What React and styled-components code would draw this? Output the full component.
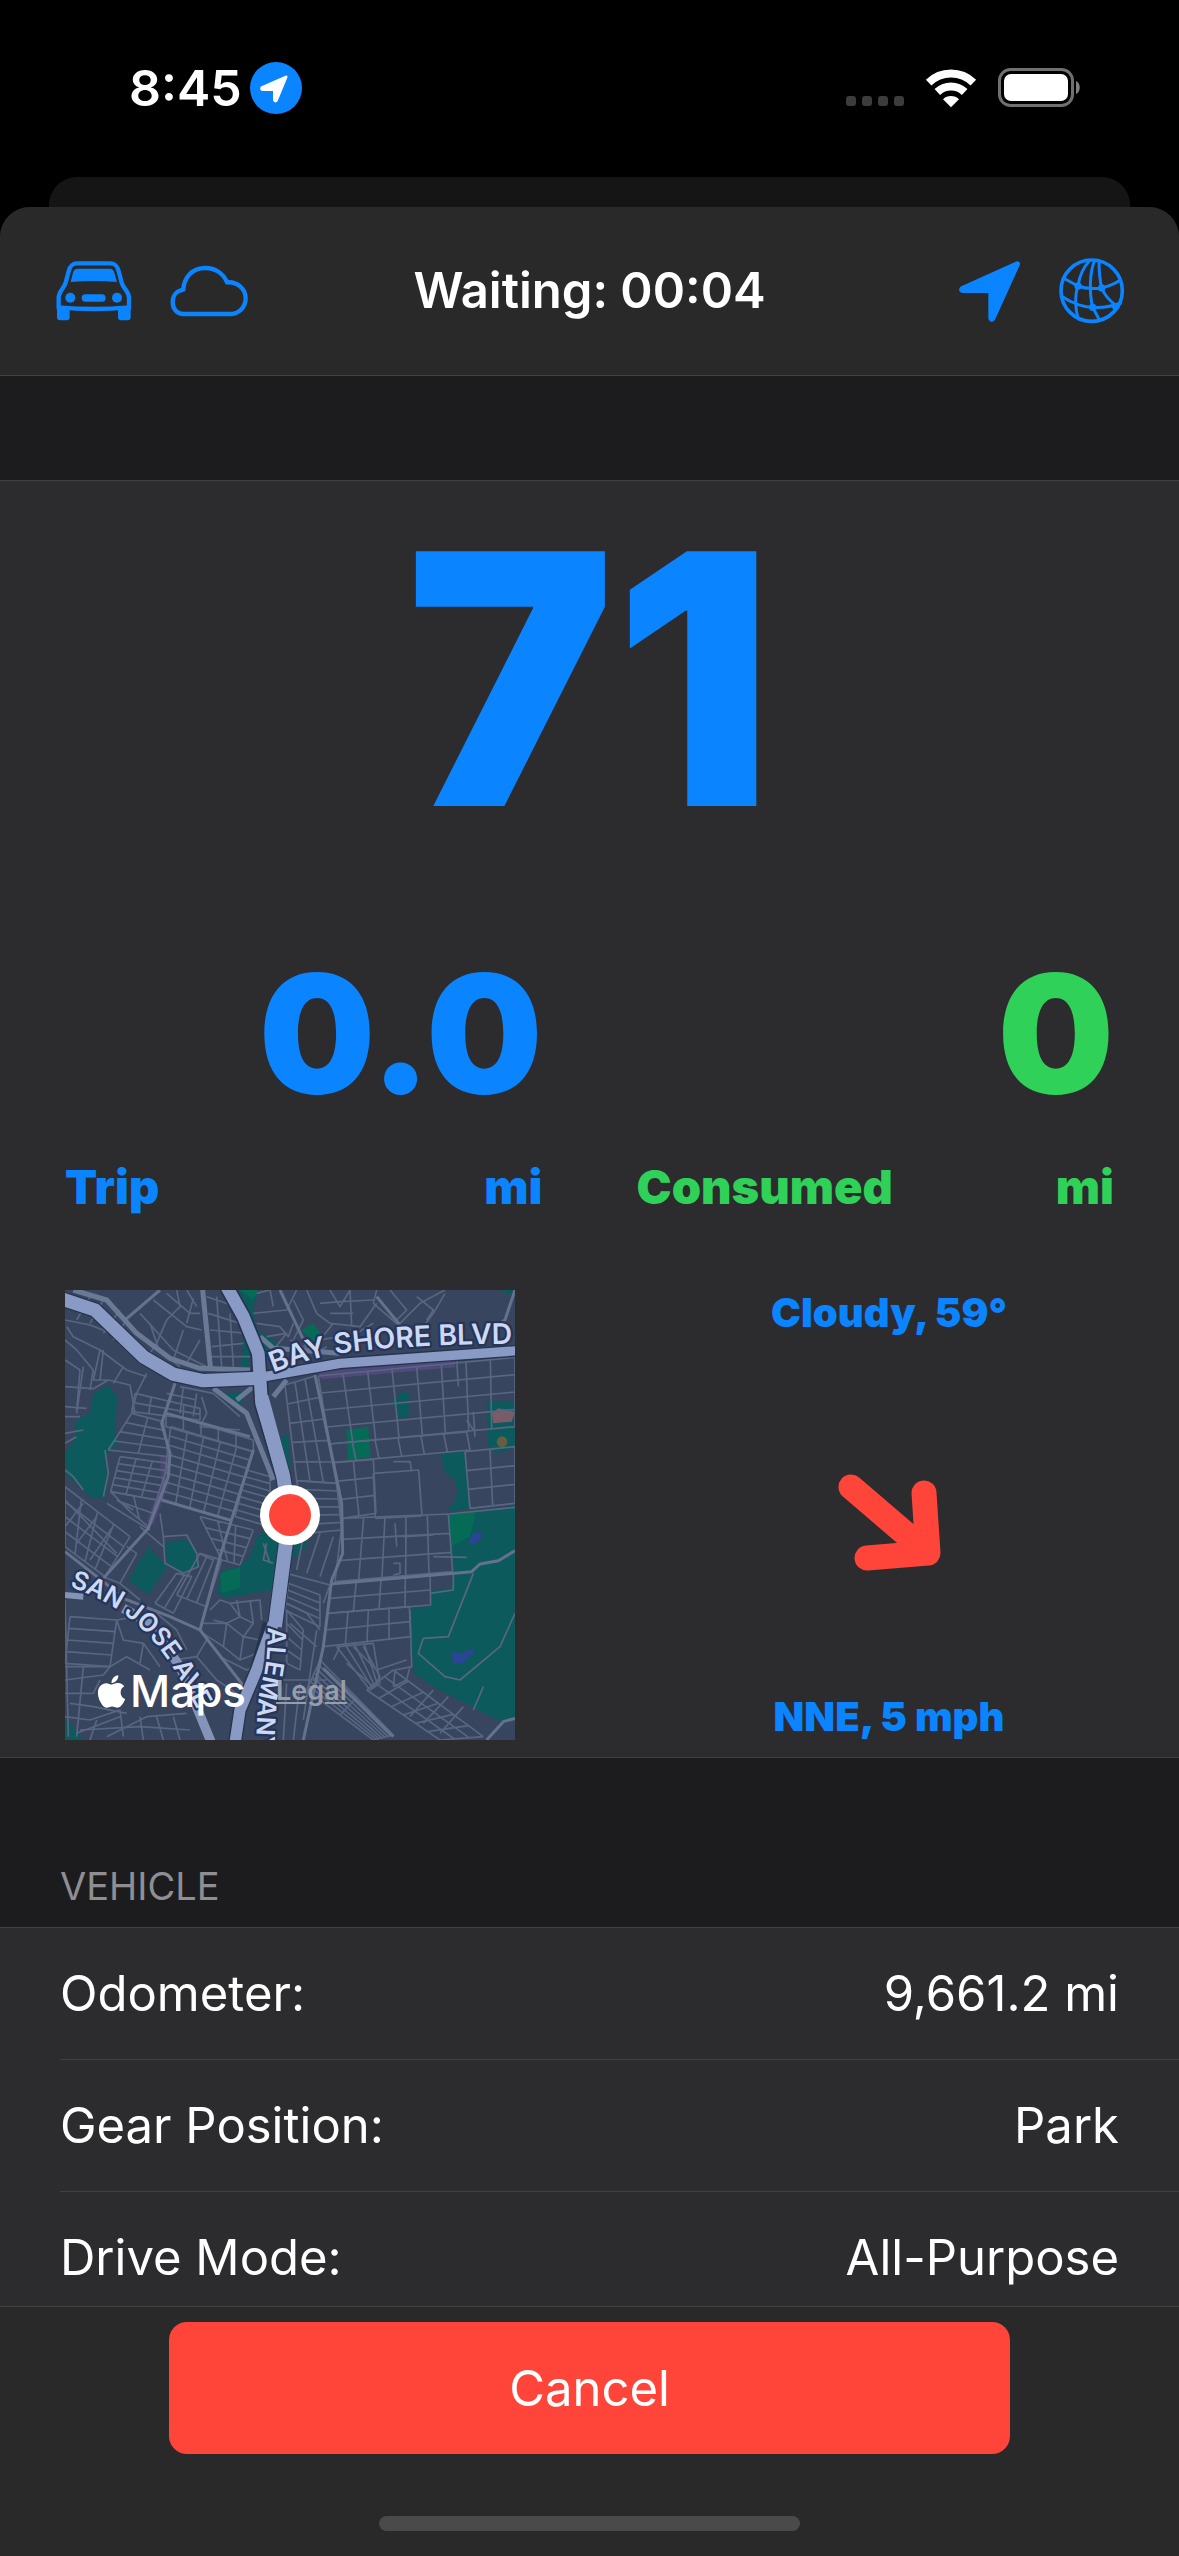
import React from "react";
import styled, { createGlobalStyle } from "styled-components";
import { FaApple } from "react-icons/fa";

const GlobalStyle = createGlobalStyle`
  :root {
    --BLUE: #0a84ff;
    --GREEN: #30d158;
    --RED: #ff453a;
    --BAR: #292929;
    --CELL: #2c2c2e;
    --GROUP: #1c1c1e;
    --LINE: #414143;
  }
  * {
    box-sizing: border-box;
  }
  body {
    margin: 0;
    background: #000;
    color: #fff;
    font-family: Inter, "Liberation Sans", sans-serif;
  }
`;

const Screen = styled.div`
  display: flex;
  flex-direction: column;
  height: 100vh;
`;

const StatusBar = styled.div`
  display: flex;
  justify-content: space-between;
  align-items: center;
  height: 176px;
  padding: 0 98px 0 129px;
`;

const StatusGroup = styled.div`
  display: flex;
  align-items: center;
  gap: ${(props) => props.$gap}px;
`;

const Clock = styled.span`
  font-size: 50px;
  line-height: 60px;
  font-weight: 600;
`;

const CellDots = styled.div`
  display: flex;
  gap: 6px;
  padding-top: 26px;

  span {
    width: 10px;
    height: 10px;
    border-radius: 3px;
    background: #3c3c3c;
  }
`;

const BackSheet = styled.div`
  height: 30px;
  margin: 1px 49px 0;
  border-radius: 28px 28px 0 0;
  background: #151515;
`;

const Sheet = styled.main`
  display: flex;
  flex-direction: column;
  flex: 1;
  min-height: 0;
  overflow: hidden;
  border-radius: 30px 30px 0 0;
  background: var(--GROUP);
`;

const Toolbar = styled.header`
  display: grid;
  grid-template-columns: 1fr auto 1fr;
  align-items: center;
  height: 169px;
  padding: 0 54px;
  border-bottom: 1px solid var(--LINE);
  background: var(--BAR);
`;

const ToolGroup = styled.div`
  display: flex;
  align-items: center;
  justify-content: ${(props) => (props.$end ? "flex-end" : "flex-start")};
  gap: 36px;
`;

const IconButton = styled.button`
  display: flex;
  padding: 0;
  border: none;
  background: none;
  color: var(--BLUE);
  cursor: pointer;
`;

const Title = styled.h1`
  margin: 0;
  font-size: 49px;
  line-height: 60px;
  font-weight: 600;
`;

const Content = styled.div`
  flex: 1;
  min-height: 0;
  overflow: hidden;
`;

const Dashboard = styled.section`
  margin-top: 104px;
  padding: 0 65px 17px;
  border-top: 1px solid var(--LINE);
  border-bottom: 1px solid var(--LINE);
  background: var(--CELL);
`;

const Speed = styled.div`
  color: var(--BLUE);
  font-size: 350px;
  line-height: 396px;
  font-weight: 900;
  text-align: center;
`;

const Stats = styled.div`
  display: grid;
  grid-template-columns: 1fr 1fr;
  gap: 94px;
  margin: 57px 0 75px;
`;

const Stat = styled.div`
  color: ${(props) => props.$color};
`;

const StatValue = styled.div`
  font-size: 164px;
  line-height: 200px;
  font-weight: 900;
  text-align: right;
`;

const StatCaption = styled.div`
  display: flex;
  justify-content: space-between;
  margin-top: 25px;
  font-size: 47px;
  line-height: 56px;
  font-weight: 900;
`;

const Surroundings = styled.div`
  display: flex;
  justify-content: space-between;
`;

const MapBox = styled.div`
  position: relative;
  width: 450px;
  height: 450px;

  > svg {
    display: block;
  }
`;

const MapCredits = styled.div`
  position: absolute;
  left: 28px;
  bottom: 22px;
  display: flex;
  align-items: center;
`;

const MapsLogo = styled.span`
  display: flex;
  align-items: center;
  margin-right: 30px;
  font-size: 44px;
  line-height: 54px;
  font-weight: 500;
`;

const LegalLink = styled.a`
  color: #969dab;
  font-size: 27px;
  line-height: 32px;
  font-weight: 600;
`;

const Weather = styled.div`
  display: flex;
  flex-direction: column;
  justify-content: space-between;
  align-items: center;
  width: 450px;
  color: var(--BLUE);
  font-size: 40px;
  line-height: 46px;
  font-weight: 900;
`;

const GroupTitle = styled.h2`
  display: flex;
  align-items: flex-end;
  height: 169px;
  margin: 0;
  padding: 0 60px 18px;
  color: #8e8e93;
  font-size: 38px;
  line-height: 46px;
  font-weight: 400;
`;

const List = styled.dl`
  margin: 0;
  padding-left: 60px;
  border-top: 1px solid var(--LINE);
  background: var(--CELL);
`;

const Row = styled.div`
  display: flex;
  justify-content: space-between;
  align-items: center;
  height: 132px;
  padding-right: 60px;
  border-bottom: 1px solid var(--LINE);
  font-size: 49px;
  line-height: 60px;

  dd {
    margin: 0;
  }
`;

const Footer = styled.footer`
  display: flex;
  flex-direction: column;
  align-items: center;
  height: 250px;
  padding: 15px 169px 25px;
  border-top: 1px solid var(--LINE);
  background: var(--BAR);
`;

const CancelButton = styled.button`
  width: 100%;
  height: 132px;
  border: none;
  border-radius: 18px;
  background: var(--RED);
  color: #fff;
  font-family: inherit;
  font-size: 49px;
  cursor: pointer;
`;

const HomeIndicator = styled.div`
  width: 50%;
  height: 15px;
  margin-top: auto;
  border-radius: 8px;
  background: #4a4a4a;
`;

const LocationBadge = () => (
  <svg width="52" height="52" viewBox="0 0 52 52" aria-hidden="true">
    <circle cx="26" cy="26" r="26" fill="#0a84ff" />
    <path
      d="M36 15L12 25.5Q11 27.5 13 27.5H24.5V38Q25.500 40 26.500 38Z"
      fill="#fff"
      stroke="#fff"
      strokeWidth="3"
      strokeLinejoin="round"
    />
  </svg>
);

const WifiIcon = () => (
  <svg width="52" height="40" viewBox="0 0 156 120" aria-label="Wi-Fi">
    <g fill="none" stroke="#fff" strokeWidth="24">
      <path d="M11 44A96 96 0 0 1 145 44" />
      <path d="M37 72A59 59 0 0 1 119 72" />
    </g>
    <path d="M78 118L54 94A34 34 0 0 1 102 94Z" fill="#fff" />
  </svg>
);

const BatteryIcon = () => (
  <svg width="83" height="40" viewBox="0 0 83 40" aria-label="Battery">
    <rect x="1.500" y="1.500" width="73" height="36" rx="11" fill="none" stroke="#707070" strokeWidth="3" />
    <rect x="6" y="6" width="64" height="27" rx="7" fill="#fff" />
    <path d="M78 13C83 15 83 24 78 26Z" fill="#808080" />
  </svg>
);

const CarIcon = () => (
  <svg width="80" height="66" viewBox="42 38 240 198" aria-hidden="true">
    <path
      d="M56 186V158C56 138 72 130 77 112L86 78C90 62 96 54 112 54H210C226 54 232 62 236 78L245 112C250 130 267 138 267 158V186Q161 196 56 186Z"
      fill="none"
      stroke="currentColor"
      strokeWidth="13"
    />
    <g fill="currentColor">
      <path d="M92 110L99 82C101 74 105 70 113 70H209C217 70 221 74 223 82L231 110Q161 104 92 110Z" />
      <circle cx="91" cy="157" r="15" />
      <circle cx="231" cy="157" r="15" />
      <rect x="125" y="147" width="72" height="22" rx="11" />
      <rect x="51" y="184" width="38" height="41" rx="9" />
      <rect x="234" y="184" width="38" height="41" rx="9" />
    </g>
  </svg>
);

const CloudIcon = () => (
  <svg width="80" height="60" viewBox="391 48 240 180" aria-hidden="true">
    <path
      d="M432 207H570C598 207 618 186 618 160C618 131 592 109 562 112C551 85 526 69 497 69C459 69 433 96 431 134C411 137 399 152 399 171C399 193 413 207 432 207Z"
      fill="none"
      stroke="currentColor"
      strokeWidth="13"
      strokeLinejoin="round"
    />
  </svg>
);

const NavIcon = () => (
  <svg width="64" height="64" viewBox="53 42 192 192" aria-hidden="true">
    <path
      d="M228 57L63 131Q59 136 65 136H149V220Q151 225 154 220Z"
      fill="currentColor"
      stroke="currentColor"
      strokeWidth="16"
      strokeLinejoin="round"
    />
  </svg>
);

const GlobeIcon = () => (
  <svg width="66" height="66" viewBox="356 37 198 198" aria-hidden="true">
    <g fill="none" stroke="currentColor" strokeWidth="9" strokeLinecap="round" strokeLinejoin="round">
      <circle cx="454" cy="135" r="92" strokeWidth="11" />
      <path d="M447 46C428 66 417 94 413 121C403 148 404 190 414 220" />
      <path d="M463 44C448 78 446 140 457 185L477 222" />
      <path d="M476 46C476 78 479 105 484 127C494 152 512 170 534 184" />
      <path d="M374 100L413 121C436 130 460 130 484 127C508 121 526 113 539 104" />
      <path d="M364 152C398 176 436 185 457 185C490 188 520 180 541 172" />
    </g>
    <g fill="currentColor">
      <circle cx="413" cy="121" r="11" />
      <circle cx="484" cy="127" r="11" />
      <circle cx="457" cy="185" r="11" />
      <path d="M512 180L544 168L524 202Z" />
    </g>
  </svg>
);

const WindArrow = () => (
  <svg width="120" height="120" viewBox="0 0 120 120" aria-label="Wind direction">
    <path
      d="M22 32L99 98M95 38L99 98L38 103"
      fill="none"
      stroke="#ff453a"
      strokeWidth="25"
      strokeLinecap="round"
      strokeLinejoin="round"
    />
  </svg>
);

// point on the segment a-b at t
const mix = (a, b, t) => [
  Math.round(a[0] + (b[0] - a[0]) * t),
  Math.round(a[1] + (b[1] - a[1]) * t),
];

// street grid inside a quad: corners clockwise from top left
const gridPath = ([tl, tr, br, bl], rows, cols) => {
  let d = "";
  for (let i = 0; i <= rows; i++) {
    d += `M${mix(tl, bl, i / rows)}L${mix(tr, br, i / rows)}`;
  }
  for (let i = 0; i <= cols; i++) {
    d += `M${mix(tl, tr, i / cols)}L${mix(bl, br, i / cols)}`;
  }
  return d;
};

const blocks = [
  { quad: [[835, 318], [1425, 262], [1425, 470], [868, 522]], rows: 4, cols: 8 },
  { quad: [[868, 522], [1280, 486], [1290, 540], [880, 578]], rows: 1, cols: 6 },
  { quad: [[880, 578], [1000, 568], [1008, 730], [905, 745]], rows: 3, cols: 2 },
  { quad: [[1275, 545], [1425, 530], [1425, 700], [1290, 715]], rows: 3, cols: 2 },
  { quad: [[1000, 610], [1136, 600], [1146, 738], [1006, 745]], rows: 1, cols: 1 },
  { quad: [[908, 745], [1225, 732], [1238, 905], [885, 935]], rows: 3, cols: 5 },
  { quad: [[875, 940], [1170, 915], [1172, 1005], [862, 1030]], rows: 2, cols: 4 },
  { quad: [[862, 1030], [1108, 1010], [1112, 1100], [850, 1130]], rows: 2, cols: 4 },
  { quad: [[735, 345], [825, 318], [890, 640], [770, 632]], rows: 5, cols: 3 },
  { quad: [[770, 632], [890, 640], [905, 780], [800, 790]], rows: 6, cols: 1 },
  { quad: [[378, 430], [640, 510], [640, 545], [378, 470]], rows: 1, cols: 5 },
  { quad: [[392, 470], [640, 545], [575, 750], [365, 690]], rows: 8, cols: 5 },
  { quad: [[275, 430], [370, 455], [385, 560], [205, 540]], rows: 4, cols: 2 },
  { quad: [[240, 560], [385, 580], [350, 690], [212, 665]], rows: 5, cols: 3 },
  { quad: [[212, 665], [350, 690], [325, 770], [270, 725]], rows: 2, cols: 2 },
  { quad: [[285, 370], [480, 415], [480, 450], [275, 425]], rows: 2, cols: 4 },
  { quad: [[620, 600], [690, 620], [690, 770], [585, 740]], rows: 7, cols: 1 },
  { quad: [[480, 740], [640, 780], [600, 885], [545, 870]], rows: 4, cols: 3 },
  { quad: [[480, 850], [545, 870], [500, 1010], [410, 975]], rows: 1, cols: 3 },
  { quad: [[410, 910], [455, 920], [400, 1030], [345, 1000]], rows: 1, cols: 2 },
  { quad: [[75, 650], [270, 800], [195, 920], [75, 830]], rows: 4, cols: 4 },
  { quad: [[90, 1040], [230, 1050], [210, 1190], [75, 1180]], rows: 4, cols: 1 },
  { quad: [[740, 1020], [790, 1080], [780, 1200], [740, 1180]], rows: 4, cols: 1 },
  { quad: [[745, 940], [840, 975], [840, 1070], [735, 1020]], rows: 4, cols: 1 },
  { quad: [[890, 1130], [1000, 1120], [1020, 1240], [990, 1260]], rows: 1, cols: 4 },
  { quad: [[840, 1170], [1060, 1395], [1000, 1410], [800, 1260]], rows: 7, cols: 2 },
  { quad: [[1060, 1200], [1330, 1400], [1200, 1410], [980, 1260]], rows: 3, cols: 6 },
];

const lanes = [
  "M75 150L150 165L215 190L330 290L420 330M80 170L100 200L180 240L260 300L320 320M75 210L110 240L160 300L150 360",
  "M75 270L120 300L110 420M180 240L160 330L200 330M320 310L290 370L275 430M75 350L160 356L205 330L270 345L285 430",
  "M130 290L110 430M75 440L120 440M250 290L220 340M190 240L180 330M75 410L140 415",
  "M150 80L110 150M190 90L150 160M240 120L190 190M260 150L220 210M300 130L400 240L500 290",
  "M340 90L440 170L485 180M380 70L450 130L480 130M410 60L420 110L380 150M440 60L470 110M460 85L440 160",
  "M290 190L420 290M330 160L360 250M380 150L350 220L330 250M430 180L400 270M480 210L440 280",
  "M500 80L590 110M505 130L600 160M510 180L620 190M515 230L610 220M530 80L545 290M570 130L580 290M510 260L630 260",
  "M640 130L740 120L770 60M650 160L720 170L745 200L760 160M680 200L740 190L700 240M650 70L690 60L700 110",
  "M800 60L830 130L870 160L960 170L1010 100M870 60L900 110L930 60M930 60L935 170M870 130L940 130M840 100L900 95L1000 90",
  "M1010 60L1000 100L1075 165L1140 100L1215 60M1050 60L1100 120L1070 150M1130 80L1180 120L1160 150M1215 70L1180 130L1150 170",
  "M750 210L830 250L860 230M760 90L790 150L760 210M880 160L840 210L950 190L1000 160",
  "M75 490L130 480M75 520L110 500M195 540L205 610L190 680M75 600L100 620L130 660",
  "M370 800L440 795L470 850L475 890L430 910L375 880L370 800M300 770L370 830M360 730L370 800M475 850L520 870",
  "M240 940L300 990M190 920L240 940L290 850M290 850L260 830",
  "M200 700L330 780M230 690L280 720M75 690L230 850M130 700L75 770M170 740L110 820M215 775L150 870",
  "M75 990L85 1400M230 1050L350 1030L410 1080L440 1140M230 1050L250 1110L310 1120L300 1180M310 1120L360 1190",
  "M75 1190L210 1190L260 1160L330 1200M75 1230L190 1215L210 1190M75 1270L160 1270L180 1230M130 1190L110 1400",
  "M75 1340L150 1350L240 1320L250 1400M90 1300L160 1310L260 1330M170 1350L150 1410M200 1400L320 1340L440 1330",
  "M300 1340L310 1410M350 1340L370 1410M400 1340L420 1410M120 1380L300 1370L450 1380M110 1390L240 1340",
  "M510 1020L540 990L570 1000L600 1040L560 1060L520 1050M570 1000L660 990L665 1050M600 1040L640 1060L610 1100L660 1110",
  "M490 1060L560 1060L550 1130L490 1090M560 1060L610 1100L600 1170L550 1130M600 1170L650 1150M540 1160L620 1200L650 1190",
  "M590 990L600 1040M630 990L640 1060M500 1110L470 1160L400 1170M470 1160L530 1230L590 1270",
  "M840 790L800 910M880 800L840 920M790 800L770 900M740 910L870 945M750 900L730 960M870 945L850 1000",
  "M740 1000L800 1030L840 1080M750 1060L830 1130M830 1080L790 1350M700 1230L860 1230M740 1240L730 1410M780 1240L760 1410",
  "M1060 575L1110 575L1115 605M1300 425L1305 500M1280 450L1300 480M1065 760L1070 830M1090 800L1180 795M1060 880L1080 880L1080 910L1060 915",
  "M1180 860L1280 862M1240 910L1240 960L1170 970M1110 1020L1115 1190L1065 1200L1060 1250",
  "M1060 1250L1100 1230L1110 1190M1330 1250L1300 1320M1180 1260L1110 1340M1225 1280L1150 1360M1270 1310L1200 1390",
  "M940 1130L1010 1200L1100 1170M970 1130L1020 1220L1000 1250L920 1180M900 1130L880 1170",
  "M1225 732L1425 712M1250 265L1255 350M670 820L690 880M680 820L670 870L700 880",
  "M380 370L470 390M430 350L420 430M470 370L460 440M420 350L520 370L600 440M485 380L500 430L480 470L600 480",
];

const MapDrawing = () => (
  <svg width="450" height="450" viewBox="75 60 1350 1350" role="img" aria-label="Map">
    <rect x="75" y="60" width="1350" height="1350" fill="#38455f" />
    <g fill="#0c5a5c">
      <path d="M205 345L232 380L225 480L235 520L195 560L205 640L195 685L150 680L75 610V545L100 520L110 450L150 430L160 370Z" />
      <path d="M600 60H655L640 110L650 200L620 300L605 290L610 180Z" />
      <path d="M655 180L720 225L700 270L650 240Z" />
      <path d="M722 500L745 495L752 600L735 590Z" />
      <path d="M378 815L440 808L475 855L470 890L430 910L380 880Z" />
      <path d="M325 830L382 890L325 975L265 930Z" />
      <path d="M655 795L690 780L750 830L800 790L800 830L740 880L690 960L560 985L530 970L550 900L600 890L630 860Z" />
      <path d="M1225 732L1425 708V1345L1390 1360L1190 1255L1120 1210L1110 1015L1165 1010L1175 960L1235 955L1240 900Z" />
      <path d="M1340 395H1425V530L1380 550L1345 540Z" />
      <path d="M1205 548L1275 540L1290 715L1225 725L1255 660L1210 600Z" />
      <path d="M1085 365L1110 370L1105 445L1070 445L1060 390Z" />
      <path d="M75 1340L100 1370L130 1410H75ZM550 370L620 365L600 410ZM1380 60H1425V80Z" />
    </g>
    <g fill="#056b57">
      <path d="M785 180L820 160L845 195L820 215Z" />
      <path d="M918 480L985 470L992 562L925 570Z" />
      <path d="M540 910L600 890V955L545 970Z" />
      <path d="M1225 732L1310 722L1290 800L1232 830Z" />
      <path d="M600 60H655L640 90Z" />
    </g>
    <path d="M1000 620L1200 595L1245 630L1250 690L1220 715L1010 728Z" fill="#38455f" />
    <g fill="#2a4593">
      <path d="M1285 815L1300 790L1325 785L1325 805L1300 825Z" />
      <path d="M1235 1145L1265 1150L1300 1135L1305 1145L1270 1180L1240 1182Z" />
    </g>
    <path d="M1355 430L1375 415L1425 425L1415 455L1360 460Z" fill="#7a5c68" />
    <circle cx="1386" cy="515" r="16" fill="#64603f" />
    <path d="M832 306L1245 270V292L845 328Z" fill="#4f4a7b" />
    <path d="M372 560L375 640L330 760" fill="none" stroke="#4b4672" strokeWidth="24" />

    <g fill="none" stroke="#596681" strokeLinejoin="round">
      <g strokeWidth="5">
        {blocks.map(({ quad, rows, cols }, i) => (
          <path key={i} d={gridPath(quad, rows, cols)} />
        ))}
        {lanes.map((d, i) => (
          <path key={i} d={d} />
        ))}
        <path d="M1425 1030L1380 1130L1260 1230L1215 1220L1135 1150L1150 1105L1225 1100L1300 910" />
      </g>
      <g stroke="#64728e" strokeWidth="9">
        <path d="M405 340L365 460L390 550L385 620L325 775L190 925" />
        <path d="M825 315L850 430L905 700L908 850L875 930L850 1130L790 1410" />
        <path d="M870 942L1295 905L1320 882L1375 872L1425 842" />
        <path d="M380 430L630 500M640 540L540 860L480 1080M365 690L575 752" />
        <path d="M75 845L190 935L250 985L390 1040L480 1080L620 1260" />
        <path d="M850 1195L1060 1400M1340 1410L1390 1355L1425 1345M720 60L800 230M360 60L255 150" />
        <path d="M1425 60L1395 150L1350 180M1010 80L1080 165" />
      </g>
      <g stroke="#6a7996" strokeWidth="15">
        <path d="M488 60L512 300M100 60L200 90L290 190L390 265L480 295L630 300" />
        <path d="M520 355L620 430L700 630M640 350L590 390M740 330L700 380M660 200L700 235L900 250" />
      </g>
    </g>

    <g fill="none" strokeLinejoin="round">
      <g stroke="#26334f">
        <path d="M60 85L165 120L310 260L400 313L490 332L650 325" strokeWidth="47" />
        <path d="M640 326L900 280L1435 242" strokeWidth="36" />
        <path d="M560 50L610 140L655 250L665 400L730 620L748 740L705 1070" strokeWidth="48" />
        <path d="M690 1060L650 1200L600 1320L585 1420" strokeWidth="42" />
      </g>
      <g stroke="#899bc4">
        <path d="M60 85L165 120L310 260L400 313L490 332L650 325" strokeWidth="40" />
        <path d="M640 326L900 280L1435 242" strokeWidth="28" />
        <path d="M560 50L610 140L655 250L665 400L730 620" strokeWidth="38" />
        <path d="M664 380L730 620L748 740L705 1070" strokeWidth="42" />
        <path d="M700 1060L650 1200L600 1320L585 1420" strokeWidth="34" />
      </g>
      <path d="M75 975L130 980" stroke="#8494b8" strokeWidth="18" />
      <path d="M250 1015L330 1060L420 1190L515 1420" stroke="#8494b8" strokeWidth="28" />
    </g>

    <defs>
      <path id="bayShore" d="M700 308Q790 272 880 253Q1080 222 1460 221" />
      <path id="sanJose" d="M88 950Q260 1010 350 1125Q440 1240 520 1420" />
      <path id="alemany" d="M683 1072Q684 1180 665 1240Q648 1300 648 1500" />
    </defs>
    <g
      fill="#cdd9f3"
      stroke="#26355a"
      strokeWidth="14"
      strokeLinejoin="round"
      paintOrder="stroke"
      fontSize="76"
      fontWeight="600"
    >
      <text fontSize="85">
        <textPath href="#bayShore">BAY SHORE BLVD</textPath>
      </text>
      <text>
        <textPath href="#sanJose">SAN JOSE AVE</textPath>
      </text>
      <text>
        <textPath href="#alemany">ALEMANY</textPath>
      </text>
    </g>

    <circle cx="750" cy="735" r="90" fill="#fff" />
    <circle cx="750" cy="735" r="63" fill="#ff453a" />
  </svg>
);

const vehicle = [
  { label: "Odometer:", value: "9,661.2 mi" },
  { label: "Gear Position:", value: "Park" },
  { label: "Drive Mode:", value: "All-Purpose" },
];

const App = () => {
  return (
    <>
      <GlobalStyle />
      <Screen>
        <StatusBar>
          <StatusGroup $gap={8}>
            <Clock>8:45</Clock>
            <LocationBadge />
          </StatusGroup>
          <StatusGroup $gap={21}>
            <CellDots>
              <span />
              <span />
              <span />
              <span />
            </CellDots>
            <WifiIcon />
            <BatteryIcon />
          </StatusGroup>
        </StatusBar>
        <BackSheet />
        <Sheet>
          <Toolbar>
            <ToolGroup>
              <IconButton aria-label="Vehicle">
                <CarIcon />
              </IconButton>
              <IconButton aria-label="Weather">
                <CloudIcon />
              </IconButton>
            </ToolGroup>
            <Title>Waiting: 00:04</Title>
            <ToolGroup $end>
              <IconButton aria-label="Location">
                <NavIcon />
              </IconButton>
              <IconButton aria-label="Network">
                <GlobeIcon />
              </IconButton>
            </ToolGroup>
          </Toolbar>

          <Content>
            <Dashboard>
              <Speed>71</Speed>
              <Stats>
                <Stat $color="var(--BLUE)">
                  <StatValue>0.0</StatValue>
                  <StatCaption>
                    <span>Trip</span>
                    <span>mi</span>
                  </StatCaption>
                </Stat>
                <Stat $color="var(--GREEN)">
                  <StatValue>0</StatValue>
                  <StatCaption>
                    <span>Consumed</span>
                    <span>mi</span>
                  </StatCaption>
                </Stat>
              </Stats>
              <Surroundings>
                <MapBox>
                  <MapDrawing />
                  <MapCredits>
                    <MapsLogo>
                      <FaApple size={37} />
                      Maps
                    </MapsLogo>
                    <LegalLink href="#legal">Legal</LegalLink>
                  </MapCredits>
                </MapBox>
                <Weather>
                  <span>Cloudy, 59°</span>
                  <WindArrow />
                  <span>NNE, 5 mph</span>
                </Weather>
              </Surroundings>
            </Dashboard>

            <GroupTitle>VEHICLE</GroupTitle>
            <List>
              {vehicle.map((item) => (
                <Row key={item.label}>
                  <dt>{item.label}</dt>
                  <dd>{item.value}</dd>
                </Row>
              ))}
            </List>
          </Content>

          <Footer>
            <CancelButton type="button">Cancel</CancelButton>
            <HomeIndicator />
          </Footer>
        </Sheet>
      </Screen>
    </>
  );
};

export default App;
